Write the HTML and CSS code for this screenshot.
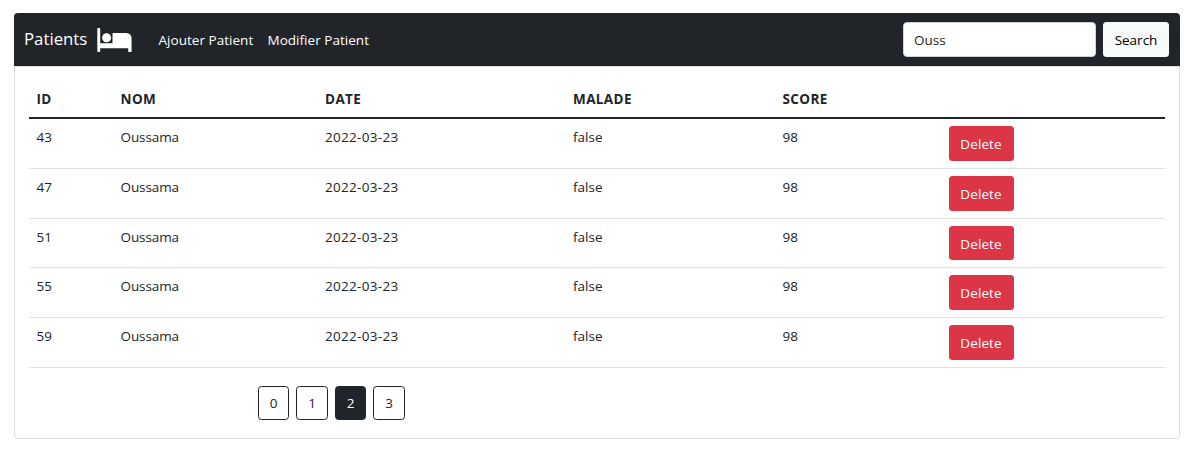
FILE: index.html
```html
<!DOCTYPE html>
<html lang="fr">
<head>
<meta charset="utf-8">
<title>Patients</title>
<link rel="stylesheet" href="styles.css">
</head>
<body>
<main class="card">
  <nav class="navbar">
    <a class="brand">Patients</a>
    <svg class="bed" viewBox="0 0 35 24" aria-hidden="true">
      <path fill="#fff" d="M.3 .8Q.3 0 1.1 0H2.4Q3.2 0 3.2 .8V15.2H15.5V5.8Q15.5 5 16.3 5H29Q34.6 5.2 34.6 10.7V23.4Q34.6 24 33.8 24H32Q31.2 24 31.2 23.2V20.3H3.2V23.2Q3.2 24 2.4 24H1.1Q.3 24 .3 23.2Z"/>
      <circle cx="9.6" cy="9.8" r="4.5" fill="#fff"/>
    </svg>
    <a class="link">Ajouter Patient</a>
    <a class="link link-edit">Modifier Patient</a>
    <form class="search">
      <input class="field" type="text" value="Ouss">
      <button class="btn btn-light" type="button">Search</button>
    </form>
  </nav>
  <section class="body">
    <table class="table">
      <colgroup><col class="c-id"><col class="c-nom"><col class="c-date"><col class="c-malade"><col class="c-score"><col></colgroup>
      <thead><tr><th>ID</th><th>NOM</th><th>DATE</th><th>MALADE</th><th>SCORE</th><th></th></tr></thead>
      <tbody>
        <tr><td>43</td><td class="name">Oussama</td><td class="date">2022-03-23</td><td>false</td><td>98</td><td class="action"><button class="btn btn-danger">Delete</button></td></tr>
        <tr><td>47</td><td class="name">Oussama</td><td class="date">2022-03-23</td><td>false</td><td>98</td><td class="action"><button class="btn btn-danger">Delete</button></td></tr>
        <tr><td>51</td><td class="name">Oussama</td><td class="date">2022-03-23</td><td>false</td><td>98</td><td class="action"><button class="btn btn-danger">Delete</button></td></tr>
        <tr><td>55</td><td class="name">Oussama</td><td class="date">2022-03-23</td><td>false</td><td>98</td><td class="action"><button class="btn btn-danger">Delete</button></td></tr>
        <tr><td>59</td><td class="name">Oussama</td><td class="date">2022-03-23</td><td>false</td><td>98</td><td class="action"><button class="btn btn-danger">Delete</button></td></tr>
      </tbody>
    </table>
    <div class="pager">
      <a class="page">0</a><a class="page">1</a><a class="page active">2</a><a class="page">3</a>
    </div>
  </section>
</main>
</body>
</html>
```
FILE: styles.css
```css
* { box-sizing: border-box; }
body {
  margin: 0;
  padding: 13px 13px 0 14px;
  background: #fff;
  color: #212529;
  font: 13.5px/21.5px "Open Sans", "Noto Sans", sans-serif;
}
.card {
  height: 426px;
  border: 1px solid #dfdfdf;
  border-radius: 4px;
}
.navbar {
  display: flex;
  align-items: center;
  height: 53px;
  margin: -1px -1px 0;
  padding: 0 11px 0 10px;
  border-radius: 4px 4px 0 0;
  background: #212529;
  color: #fff;
}
.brand { width: 73px; font-size: 16.8px; padding-bottom: 2px; white-space: nowrap; }
.bed { width: 35px; height: 24px; margin-top: 1px; flex: none; }
.link { margin-left: 26.5px; width: 95px; padding-top: 3px; letter-spacing: 0.03px; white-space: nowrap; }
.link-edit { margin-left: 14px; width: auto; }
.search { display: flex; gap: 7px; margin-left: auto; }
.field {
  width: 193px;
  height: 35px;
  padding: 0 10px;
  border: 1px solid #ced4da;
  border-radius: 4px;
  background: #fff;
  color: #212529;
  font: inherit;
}
.btn {
  display: block;
  height: 34.75px;
  padding: 3px 0 0;
  border: 0;
  border-radius: 3.5px;
  font: inherit;
  text-align: center;
}
.btn-light { width: 66px; height: 35px; background: #f8f9fa; color: #000; }
.btn-danger { width: 65px; background: #dc3545; color: #fff; letter-spacing: 0.1px; }
.body { padding: 14px; border-top: 1px solid #dfdfdf; }
.table {
  width: 1136px;
  table-layout: fixed;
  border-collapse: separate;
  border-spacing: 0;
}
.c-id { width: 84px; }
.c-nom { width: 204.5px; }
.c-date { width: 248px; }
.c-malade { width: 209.5px; }
.c-score { width: 166px; }
th { height: 38px; padding: 2px 7.5px 0; border-bottom: 2px solid #212529; text-align: left; font-weight: 700; letter-spacing: 0.4px; }
td { height: 49.75px; padding: 8px 7.5px 6px; border-bottom: 1px solid #dee2e6; vertical-align: top; }
.action { padding-top: 7px; }
.name { letter-spacing: -0.1px; }
.date { letter-spacing: 0.3px; }
.pager { display: flex; gap: 7.2px; margin: 18px 0 0 229px; }
.page {
  width: 31.3px;
  height: 34px;
  border: 1px solid #212529;
  border-radius: 3.5px;
  text-align: center;
  line-height: 33px;
}
.page.active { background: #212529; color: #fff; }
```
